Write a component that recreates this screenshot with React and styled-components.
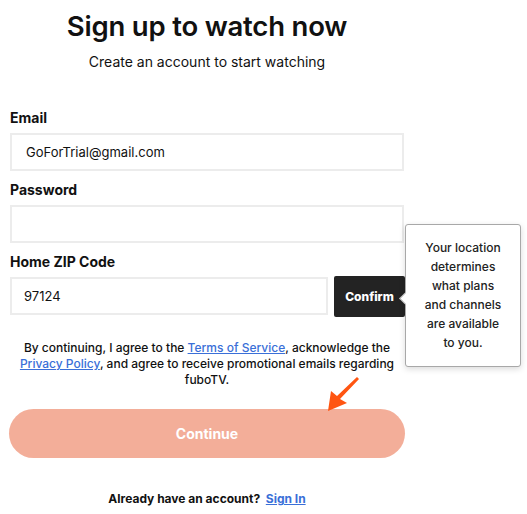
import React from "react";
import styled, { createGlobalStyle } from "styled-components";

const Global = createGlobalStyle`
  html, body { margin: 0; padding: 0; background: #fff; }
  body { font-family: Inter, "Noto Sans", Arial, sans-serif; color: #111; }
  * { box-sizing: border-box; }
`;

const Page = styled.div`
  width: 527px;
  height: 514px;
  padding: 8px 0 0 10px;
  position: relative;
  overflow: hidden;
`;

const Column = styled.div`
  width: 394px;
  display: flex;
  flex-direction: column;
`;

const Title = styled.h1`
  margin: 0;
  font-size: 27.5px;
  line-height: 36px;
  font-weight: 600;
  text-align: center;
  letter-spacing: -0.2px;
  color: #111;
`;

const Subtitle = styled.p`
  margin: 8px 0 0;
  font-size: 14px;
  line-height: 20px;
  text-align: center;
  color: #111;
`;

const Form = styled.div`
  margin-top: 37px;
  display: flex;
  flex-direction: column;
`;

const Label = styled.label`
  font-size: 14px;
  font-weight: 700;
  line-height: 18px;
  margin-bottom: 6px;
  margin-top: ${(p) => (p.$first ? "0" : "10px")};
`;

const Input = styled.div`
  height: 38px;
  flex: ${(p) => (p.$grow ? "1 1 auto" : "0 0 auto")};
  border: 2px solid #ececec;
  display: flex;
  align-items: center;
  padding-left: ${(p) => (p.$pad ? p.$pad : "14px")};
  font-size: 13px;
  color: #111;
`;

const ZipRow = styled.div`
  display: flex;
  gap: 6px;
  position: relative;
`;

const ConfirmBtn = styled.div`
  width: 71px;
  height: 41px;
  margin-top: -1px;
  margin-right: -1px;
  background: #232323;
  color: #fff;
  border-radius: 2px;
  font-size: 12px;
  font-weight: 800;
  display: flex;
  align-items: center;
  justify-content: center;
`;

const Tooltip = styled.div`
  position: absolute;
  left: 395px;
  top: -53px;
  width: 116px;
  height: 143px;
  background: #fff;
  border: 1px solid #a8a8a8;
  border-radius: 3px;
  box-shadow: 0 2px 6px rgba(0, 0, 0, 0.15);
  font-size: 12px;
  line-height: 19px;
  text-align: center;
  padding: 13px 14px 0;
  color: #222;
  font-weight: 500;
  &::before {
    content: "";
    position: absolute;
    left: -5px;
    top: 69px;
    width: 8px;
    height: 8px;
    background: #fff;
    border-left: 1px solid #a8a8a8;
    border-bottom: 1px solid #a8a8a8;
    transform: rotate(45deg);
  }
`;

const Terms = styled.p`
  margin: 23px 0 0;
  font-size: 12px;
  line-height: 16px;
  text-align: center;
  font-weight: 500;
  color: #111;
`;

const Link = styled.a`
  color: #3a6fd8;
  text-decoration: underline;
  font-weight: ${(p) => (p.$bold ? 700 : 500)};
`;

const ContinueBtn = styled.div`
  margin-top: 21px;
  margin-left: -1px;
  width: 396px;
  height: 49px;
  border-radius: 25px;
  background: #f3ae99;
  color: #fff;
  font-size: 14px;
  font-weight: 700;
  display: flex;
  align-items: center;
  justify-content: center;
`;

const Footer = styled.p`
  margin: 33px 0 0;
  text-align: center;
  font-size: 12px;
  line-height: 16px;
  font-weight: 700;
  color: #111;
`;

const Arrow = styled.svg`
  position: absolute;
  left: 324px;
  top: 375px;
`;

export default function App() {
  return (
    <>
      <Global />
      <Page>
        <Column>
          <Title>Sign up to watch now</Title>
          <Subtitle>Create an account to start watching</Subtitle>
          <Form>
            <Label $first>Email</Label>
            <Input>GoForTrial@gmail.com</Input>
            <Label>Password</Label>
            <Input />
            <Label>Home ZIP Code</Label>
            <ZipRow>
              <Input $grow $pad="12px">97124</Input>
              <ConfirmBtn>Confirm</ConfirmBtn>
              <Tooltip>
                Your location determines what plans and channels are available to you.
              </Tooltip>
            </ZipRow>
            <Terms>
              By continuing, I agree to the <Link>Terms of Service</Link>, acknowledge the{" "}
              <Link>Privacy Policy</Link>, and agree to receive promotional emails regarding fuboTV.
            </Terms>
            <ContinueBtn>Continue</ContinueBtn>
            <Footer>
              Already have an account?&nbsp; <Link $bold>Sign In</Link>
            </Footer>
          </Form>
        </Column>
        <Arrow width="36" height="38" viewBox="0 0 36 38">
          <path
            d="M33 2 L35 4 L16 24 L23 28 L4 36 L7 16 L13 21 Z"
            fill="#ff5511"
          />
        </Arrow>
      </Page>
    </>
  );
}
